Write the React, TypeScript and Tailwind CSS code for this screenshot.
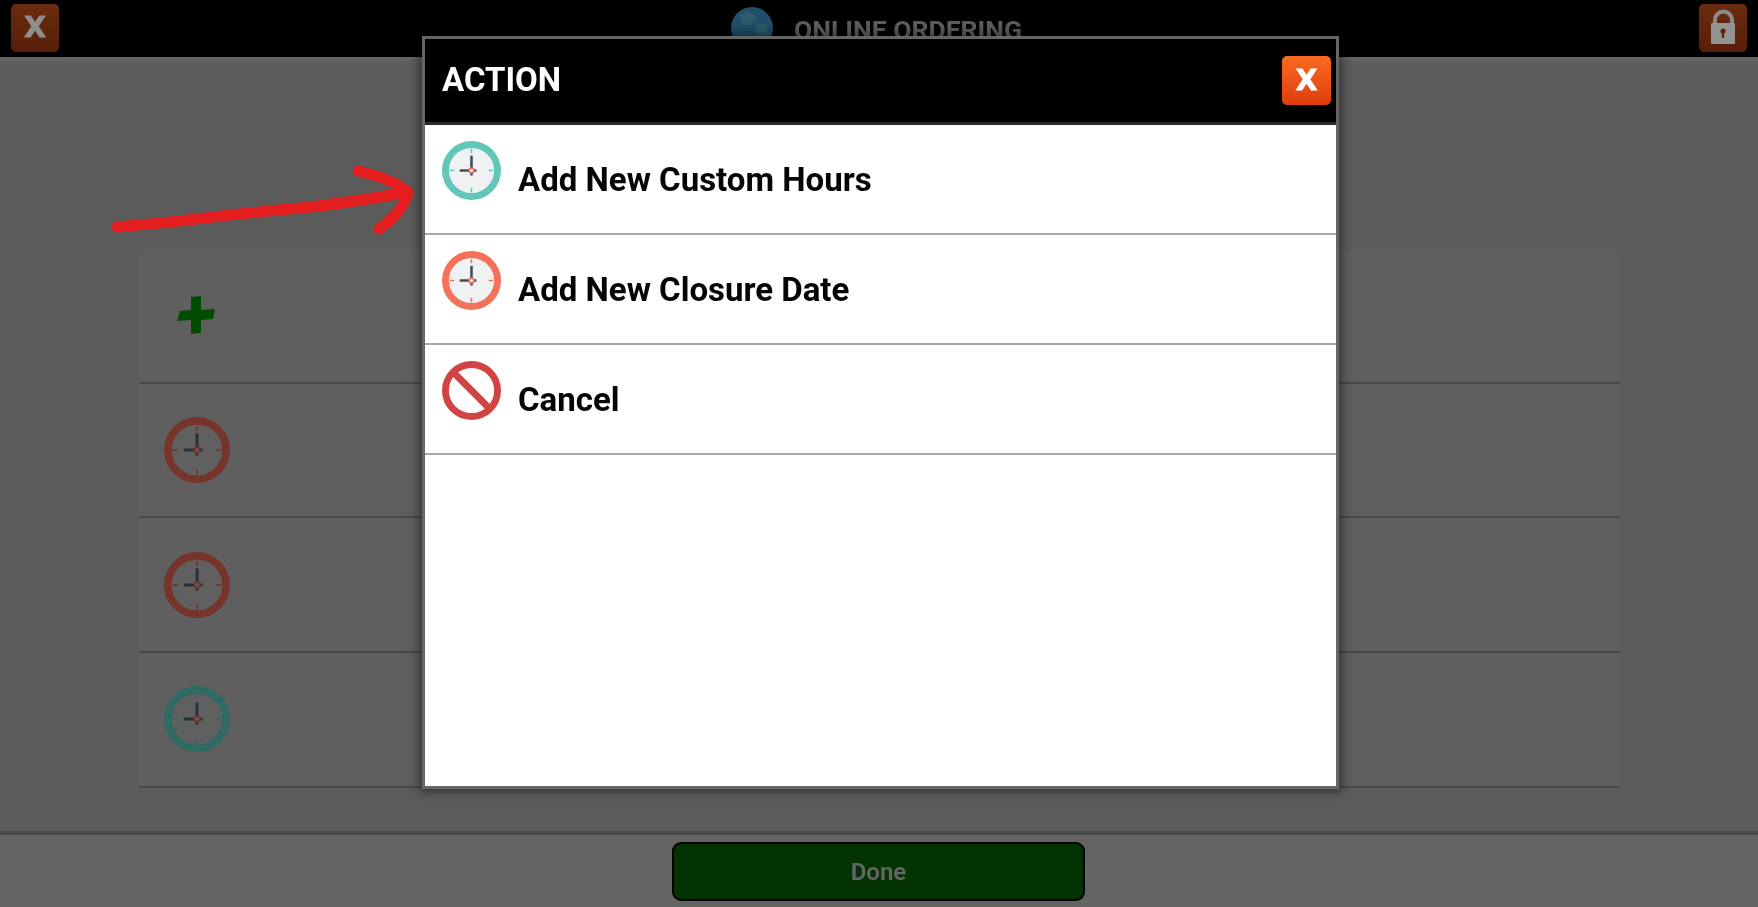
const ROW_LINE = 'border-b-2 border-[#484848]';

function Clock({ ring, face, hand, dot, size }: { ring: string; face: string; hand: string; dot: string; size: string }) {
  return (
    <svg viewBox="0 0 60 60" className={size}>
      <circle cx="30" cy="30" r="26.5" fill={face} stroke={ring} strokeWidth="7" />
      <path d="M30 8v4.500M30 47.500v4.500M8 30h4.500M47.500 30h4.500" stroke={ring} strokeWidth="1.600" fill="none" />
      <path d="M30 15v20M18 30h17" stroke={hand} strokeWidth="2.600" fill="none" />
      <circle cx="30" cy="30" r="2.400" fill={face} stroke={dot} strokeWidth="1.800" />
    </svg>
  );
}

function NoEntry() {
  return (
    <svg viewBox="0 0 60 60" className="w-[59px] h-[59px]">
      <circle cx="30" cy="30" r="26.5" fill="none" stroke="#d24343" strokeWidth="7" />
      <path d="M12 12l36 36" stroke="#d24343" strokeWidth="7" fill="none" />
    </svg>
  );
}

function Plus() {
  return (
    <svg viewBox="0 0 40 40" className="w-[40px] h-[40px]">
      <path d="M15 2l10-1v14l14-1-2 10-12 1v13l-10 1v-14l-14 1 3-10 11-1z" fill="#004c00" />
    </svg>
  );
}

function Globe() {
  return (
    <svg viewBox="0 0 42 42" className="w-[42px] h-[42px]">
      <circle cx="21" cy="21" r="21" fill="#214f69" />
      <path d="M8 8l10-4 8 6-6 8-8 0zM26 16l10 2 2 10-8 6-6-8z" fill="#2e5a6b" />
    </svg>
  );
}

function Lock() {
  return (
    <svg viewBox="0 0 48 48" className="w-[48px] h-[48px]">
      <path d="M16 21v-5a8.500 8.500 0 0 1 17 0v5" fill="none" stroke="#8c8c8c" strokeWidth="4" />
      <rect x="12" y="19" width="24" height="21" rx="1" fill="#949494" />
      <circle cx="24" cy="27" r="2.600" fill="#642408" />
      <rect x="22.800" y="27" width="2.400" height="7" fill="#642408" />
    </svg>
  );
}

const actions = [
  { label: 'Add New Custom Hours', icon: <Clock ring="#62c6b8" face="#f0f1f3" hand="#3e4d5e" dot="#f0705a" size="w-[59px] h-[59px]" /> },
  { label: 'Add New Closure Date', icon: <Clock ring="#f5715a" face="#f0f1f3" hand="#3e4d5e" dot="#f0705a" size="w-[59px] h-[59px]" /> },
  { label: 'Cancel', icon: <NoEntry /> },
];

const backgroundRows = [
  { icon: <Plus />, pad: 'pl-[37px]' },
  { icon: <Clock ring="#76342a" face="#606061" hand="#25303a" dot="#76342a" size="w-[66px] h-[66px]" />, pad: 'pl-[25px]' },
  { icon: <Clock ring="#76342a" face="#606061" hand="#25303a" dot="#76342a" size="w-[66px] h-[66px]" />, pad: 'pl-[25px]' },
  { icon: <Clock ring="#2f6a64" face="#606061" hand="#25303a" dot="#76342a" size="w-[66px] h-[66px]" />, pad: 'pl-[25px]' },
];

export default function App() {
  return (
    <div className="relative flex h-[907px] w-[1758px] flex-col overflow-hidden bg-[#5c5c5c] font-['Roboto',sans-serif] blur-[0.5px]">
      {/* Top bar */}
      <div className="flex h-[57px] shrink-0 items-center justify-between bg-black px-[11px] pb-[1px]">
        <button className="flex h-[48px] w-[48px] items-center justify-center rounded-[5px] bg-gradient-to-b from-[#6a2c0f] to-[#581e08] font-['DejaVu_Sans',sans-serif] text-[28px] leading-none font-bold text-[#8f8f8f] [-webkit-text-stroke:1px_#8f8f8f]">
          X
        </button>
        <div className="mr-[5px] flex items-center gap-[21px]">
          <Globe />
          <span className="mt-[4px] bg-gradient-to-b from-[#555555] to-[#6c6c6c] bg-clip-text text-[26.5px] font-bold text-transparent">
            ONLINE ORDERING
          </span>
        </div>
        <button className="h-[48px] w-[48px] rounded-[5px] bg-gradient-to-b from-[#6a2c0f] to-[#581e08]">
          <Lock />
        </button>
      </div>

      {/* Hours list behind the dialog */}
      <div className="flex-1 bg-gradient-to-b from-[#656565] from-0% to-[#5c5c5c] to-[1%] pt-[192px]">
        <div className="mx-auto w-[1481px] rounded-t-[4px] bg-[#5f5f5f]">
          {backgroundRows.map((row, i) => (
            <div key={i} className={`flex h-[134.67px] items-center ${row.pad} ${ROW_LINE}`}>
              {row.icon}
            </div>
          ))}
        </div>
      </div>

      {/* Footer */}
      <div className="flex h-[76px] shrink-0 items-start justify-center border-t-4 border-[#494949] bg-[#646464] pt-[7px]">
        <button className="ml-[-1px] h-[59px] w-[413px] rounded-[9px] border-2 border-black bg-[#033303] text-[24px] font-semibold text-[#666666]">
          Done
        </button>
      </div>

      {/* Action dialog */}
      <div className="absolute top-[36px] left-[422px] flex h-[753px] w-[917px] flex-col border-[3px] border-[#666666] bg-white shadow-[0_0_10px_3px_rgba(0,0,0,0.45)]">
        <div className="flex h-[86px] shrink-0 items-center justify-between border-b-[3px] border-[#2b2b2b] bg-black pr-[5px] pl-[17px]">
          <span className="-mt-[1px] text-[33px] font-bold text-white">ACTION</span>
          <button className="flex h-[49px] w-[49px] items-center justify-center rounded-[5px] bg-gradient-to-b from-[#f96a22] to-[#e03c0c] font-['DejaVu_Sans',sans-serif] text-[28px] leading-none font-bold text-white [-webkit-text-stroke:1px_white]">
            X
          </button>
        </div>
        {actions.map((action) => (
          <div key={action.label} className="flex h-[110px] shrink-0 items-start gap-[17px] border-b-2 border-[#a8a8a8] pt-[16px] pl-[17px]">
            {action.icon}
            <span className="mt-[14px] text-[33px] font-bold text-[#050505]">{action.label}</span>
          </div>
        ))}
      </div>

      {/* Hand-drawn arrow pointing at the first action */}
      <svg viewBox="0 0 1758 907" className="pointer-events-none absolute inset-0 h-[907px] w-[1758px]">
        <path d="M117 227C180 222 230 214 300 208C340 204 375 198 408 192" fill="none" stroke="#e41e1e" strokeWidth="11" strokeLinecap="round" />
        <path d="M358 171C380 176 398 184 408 192C405 206 392 220 379 229" fill="none" stroke="#e41e1e" strokeWidth="11" strokeLinecap="round" strokeLinejoin="round" />
      </svg>
    </div>
  );
}
